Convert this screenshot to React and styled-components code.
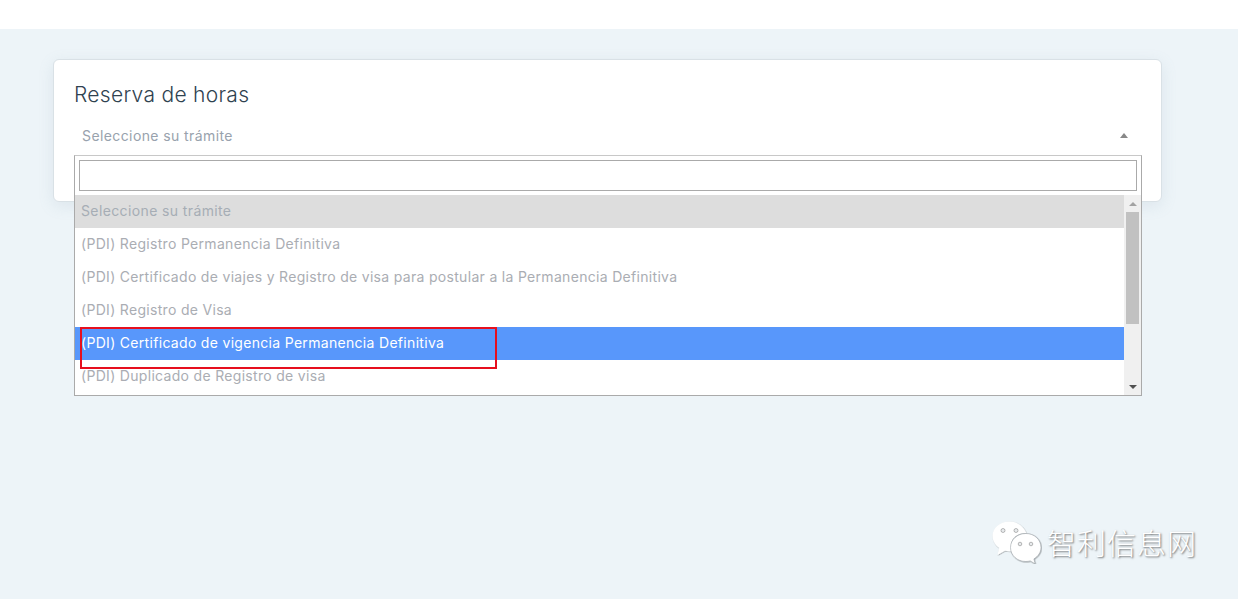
import React from 'react';
import styled, { createGlobalStyle } from 'styled-components';

const Global = createGlobalStyle`
  html, body { margin: 0; padding: 0; background: #edf4f8; }
  body { font-family: "Inter", "Open Sans", sans-serif; overflow: hidden; }
`;
const Page = styled.div`
  position: relative;
  width: 1238px;
  height: 599px;
  background: #edf4f8;
  overflow: hidden;
`;
const TopBar = styled.div`height: 29px; background: #fff;`;
const Main = styled.main`padding: 30px 76px 0 53px;`;
const Card = styled.section`
  position: relative;
  box-sizing: border-box;
  height: 143px;
  padding: 22px 20px 0 20px;
  background: #fff;
  border: 1px solid #d9e1e6;
  border-radius: 6px;
  box-shadow: 0 4px 16px rgba(120, 150, 170, 0.14);
`;
const Title = styled.h1`
  margin: 0;
  font-size: 21px;
  line-height: 26px;
  font-weight: 300;
  letter-spacing: 0.3px;
  color: #2f4250;
`;
const SelectRow = styled.div`
  display: flex;
  align-items: center;
  justify-content: space-between;
  height: 34px;
  margin-top: 10px;
  padding: 0 13px 0 8px;
`;
const SelectText = styled.span`font-size: 14px; letter-spacing: 0.4px; color: #98a2ad;`;
const Caret = styled.span`
  width: 0; height: 0;
  border-left: 4px solid transparent;
  border-right: 4px solid transparent;
  border-bottom: 5px solid #888;
`;
const Dropdown = styled.div`
  position: absolute;
  left: 20px;
  top: 95px;
  width: 1068px;
  height: 241px;
  box-sizing: border-box;
  background: #fff;
  border: 1px solid #aaa;
  border-top-color: #c8c8c8;
  display: flex;
  flex-direction: column;
`;
const SearchWrap = styled.div`padding: 4px;`;
const Search = styled.input`
  display: block;
  box-sizing: border-box;
  width: 100%;
  height: 31px;
  border: 1px solid #aaa;
  background: #fff;
  outline: none;
`;
const ListWrap = styled.div`display: flex; flex: 1; min-height: 0;`;
const List = styled.ul`
  list-style: none;
  margin: 0;
  padding: 0;
  flex: 1;
  overflow: hidden;
`;
const Option = styled.li`
  height: 33px;
  line-height: 31px;
  padding-left: 6px;
  font-size: 14px;
  letter-spacing: ${p => (p.$muted ? '0.38px' : '0.31px')};
  white-space: nowrap;
  color: ${p => (p.$active ? '#fff' : p.$muted ? '#a6adb5' : '#aaadb3')};
  background: ${p => (p.$active ? '#5897fb' : p.$muted ? '#ddd' : '#fff')};
`;
const Scrollbar = styled.div`
  width: 17px;
  background: #f0f0f0;
  display: flex;
  flex-direction: column;
  align-items: center;
`;
const ScrollBtn = styled.div`
  height: 17px;
  flex: none;
  display: flex;
  align-items: center;
  justify-content: center;
  &::after {
    content: '';
    width: 0; height: 0;
    border-left: 4px solid transparent;
    border-right: 4px solid transparent;
    ${p => p.$down
      ? 'border-top: 4px solid #505050;'
      : 'border-bottom: 4px solid #a3a3a3;'}
  }
`;
const ScrollTrack = styled.div`flex: 1; width: 100%; display: flex; justify-content: center;`;
const Thumb = styled.div`width: 13px; height: 112px; background: #c1c1c1;`;
const Highlight = styled.div`
  position: absolute;
  left: 80px;
  top: 327px;
  width: 417px;
  height: 42px;
  box-sizing: border-box;
  border: 2px solid #e60f1e;
`;
const Watermark = styled.div`
  position: absolute;
  left: 992px;
  top: 521px;
  display: flex;
  align-items: flex-start;
  gap: 5px;
`;
const WatermarkText = styled.span`
  font-family: "Noto Sans CJK SC", sans-serif;
  font-size: 29px;
  line-height: 43px;
  font-weight: 300;
  letter-spacing: 1px;
  color: #fff;
  text-shadow: 1px 1px 2px rgba(0,0,0,0.55);
`;

const WeChat = () => (
  <svg width="50" height="43" viewBox="0 0 50 43">
    <defs>
      <filter id="s" x="-10%" y="-10%" width="120%" height="120%">
        <feDropShadow dx="0.5" dy="0.5" stdDeviation="0.6" floodColor="#000" floodOpacity="0.45" />
      </filter>
    </defs>
    <g filter="url(#s)" fill="#fff">
      <path d="M17.500 0.500C8 .5.500 6.800.500 14.800c0 5 2.600 9.300 6.700 12L5.500 34l7.400-4.300c1.400.3 3 .5 4.600.5 1 0 2-.1 3-.2-1-1.800-1.500-3.500-1.500-5.500 0-7 6-12.500 14.500-12.500h.8C31.800 5.400 25.400.5 17.500.5z" />
      <path d="M49 26.500C49 18.500 42.200 12.500 33.800 12.500S18.500 18.500 18.500 26.500 25.400 40.500 33.800 40.500c1.500 0 3-.2 4.400-.6l5 3-1.300-5C46.200 35.300 49 31.300 49 26.500z" stroke="#8a9298" strokeWidth="0.5" />
    </g>
    <circle cx="11" cy="9.500" r="2" fill="#e8ebed" stroke="#777" strokeWidth="0.5" />
    <circle cx="24" cy="9.500" r="2" fill="#e8ebed" stroke="#777" strokeWidth="0.5" />
    <circle cx="28" cy="23" r="1.800" fill="#e8ebed" stroke="#777" strokeWidth="0.5" />
    <circle cx="39" cy="23" r="1.800" fill="#e8ebed" stroke="#777" strokeWidth="0.5" />
  </svg>
);

const options = [
  'Seleccione su trámite',
  '(PDI) Registro Permanencia Definitiva',
  '(PDI) Certificado de viajes y Registro de visa para postular a la Permanencia Definitiva',
  '(PDI) Registro de Visa',
  '(PDI) Certificado de vigencia Permanencia Definitiva',
  '(PDI) Duplicado de Registro de visa',
];

export default function App() {
  return (
    <Page>
      <Global />
      <TopBar />
      <Main>
        <Card>
          <Title>Reserva de horas</Title>
          <SelectRow>
            <SelectText>Seleccione su trámite</SelectText>
            <Caret />
          </SelectRow>
          <Dropdown>
            <SearchWrap><Search /></SearchWrap>
            <ListWrap>
              <List>
                {options.map((o, i) => (
                  <Option key={o} $muted={i === 0} $active={i === 4}>{o}</Option>
                ))}
              </List>
              <Scrollbar>
                <ScrollBtn />
                <ScrollTrack><Thumb /></ScrollTrack>
                <ScrollBtn $down />
              </Scrollbar>
            </ListWrap>
          </Dropdown>
        </Card>
      </Main>
      <Highlight />
      <Watermark>
        <WeChat />
        <WatermarkText>智利信息网</WatermarkText>
      </Watermark>
    </Page>
  );
}
